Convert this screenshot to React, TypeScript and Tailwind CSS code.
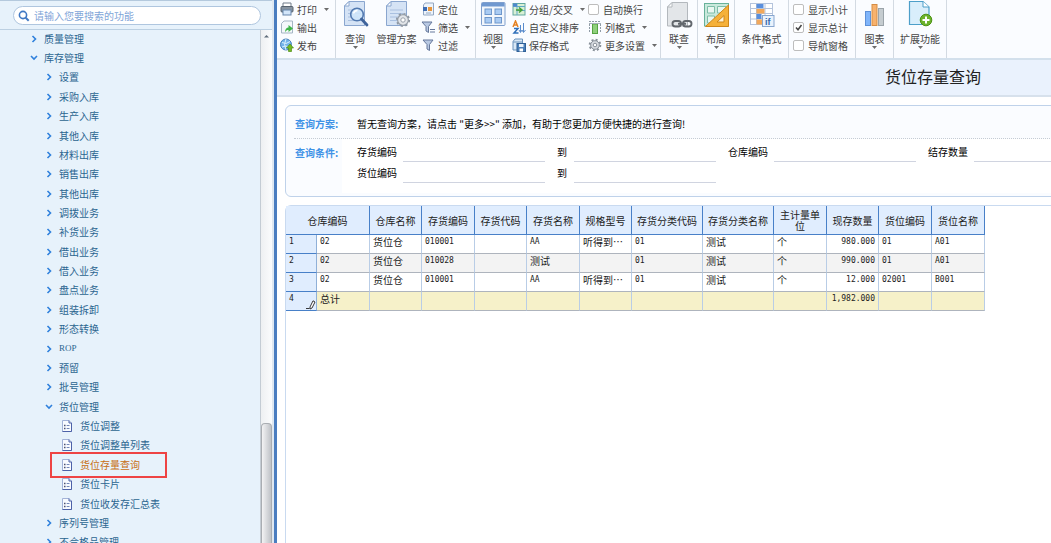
import React from "react";

function PageShape({ children }: { children?: React.ReactNode }) {
  return (
    <svg viewBox="0 0 28 28" className="h-7 w-7 shrink-0" aria-hidden="true">
      <path d="M8 1.5H23.5V25.5H3.5V6Z" fill="#d5e3f5" stroke="#8aa6cf" />
      <path d="M8 1.5V6H3.5Z" fill="#fff" stroke="#8aa6cf" />
      <path d="M7 10H20M7 13.5H20M7 17H17M7 20.5H20" stroke="#a9c0e0" strokeWidth="1.2" />
      {children}
    </svg>
  );
}

const icons = {
  search: (
    <PageShape>
      <circle cx="16" cy="14.5" r="6.3" fill="#cfe6fb" fillOpacity=".9" stroke="#5279b0" strokeWidth="1.6" />
      <path d="M12.5 13.5a4 4 0 0 1 4-3" stroke="#fff" strokeWidth="1.3" fill="none" />
      <path d="M20.5 19L26 25" stroke="#3f649c" strokeWidth="2.8" strokeLinecap="round" />
    </PageShape>
  ),
  plan: (
    <PageShape>
      <circle cx="20" cy="20" r="5.4" fill="#e3e6ea" stroke="#98a0aa" strokeWidth="1.3" />
      <circle cx="20" cy="20" r="6.3" fill="none" stroke="#8d96a1" strokeWidth="1.6" strokeDasharray="2.2 2.7" />
      <circle cx="20" cy="20" r="2.2" fill="#fff" stroke="#98a0aa" />
    </PageShape>
  ),
  view: (
    <svg viewBox="0 0 28 28" className="h-7 w-7" aria-hidden="true">
      <rect x="2.5" y="2.5" width="23.5" height="23" rx="1" fill="#f3f7fc" stroke="#7f9fce" />
      <rect x="3" y="3" width="22.5" height="3.5" fill="#6f98d0" />
      <g fill="#a9cbf3" stroke="#6f97cb">
        <rect x="6" y="9" width="6.5" height="5.5" />
        <rect x="16" y="9" width="6.5" height="5.5" />
        <rect x="6" y="17.5" width="6.5" height="5.5" />
        <rect x="16" y="17.5" width="6.5" height="5.5" />
      </g>
    </svg>
  ),
  link: (
    <svg viewBox="0 0 28 28" className="h-7 w-7" aria-hidden="true">
      <path d="M7 2.5H22.5V26H2.5V7Z" fill="#e3e6e9" stroke="#b3b8bd" />
      <path d="M7 2.5V7H2.5Z" fill="#fff" stroke="#b3b8bd" />
      <g fill="none" stroke="#62676d" strokeWidth="1.9">
        <rect x="7.5" y="21" width="8.5" height="5.5" rx="2.7" />
        <rect x="18" y="21" width="8.5" height="5.5" rx="2.7" />
        <path d="M13 23.8H21" />
      </g>
    </svg>
  ),
  layout: (
    <svg viewBox="0 0 28 28" className="h-7 w-7" aria-hidden="true">
      <rect x="2.500" y="3.5" width="24" height="22.5" fill="#c9e9dc" stroke="#68b19a" />
      <path d="M5.5 6.5H12.5V13H5.5ZM15.5 6.5H24V13H15.5ZM5.5 16H12.5V23H5.5Z" fill="#eaf7f1" stroke="#7dbda8" />
      <path d="M26.5 5V26.5H3.5Z" fill="#f5b13a" stroke="#cf8719" />
      <path d="M22 15.5V22H15Z" fill="#fff3d8" stroke="#cf8719" />
    </svg>
  ),
  condition: (
    <svg viewBox="0 0 28 28" className="h-7 w-7" aria-hidden="true">
      <rect x="2.5" y="3.5" width="22" height="21" fill="#fff" stroke="#b5c4dc" />
      <path d="M2.5 8.5H24.5M2.500 13.5H24.5M2.5 19H24.5M8.5 3.5V24.5M17 3.5V24.5" stroke="#b5c4dc" />
      <rect x="8.5" y="4" width="7" height="4" fill="#5b8fdc" />
      <rect x="8.5" y="9" width="8" height="4.5" fill="#f2a85b" />
      <rect x="8.5" y="14" width="5" height="5" fill="#5b8fdc" />
      <rect x="8.5" y="19.5" width="6" height="5" fill="#f2a85b" />
      <rect x="14.5" y="15.5" width="11.5" height="11" fill="#e9f2fd" stroke="#87a6cf" />
      <text x="17" y="24.5" fontSize="9" fontWeight="700" fill="#3568ad" fontFamily="Liberation Sans, sans-serif">if</text>
    </svg>
  ),
  chart: (
    <svg viewBox="0 0 28 28" className="h-7 w-7" aria-hidden="true">
      <rect x="4.5" y="11.5" width="5" height="14" fill="#80b5fa" stroke="#5e91d8" />
      <rect x="11" y="4.5" width="5" height="21" fill="#f8b26d" stroke="#d58d45" />
      <rect x="17.5" y="8.5" width="5" height="17" fill="#c5ccd0" stroke="#9ba4aa" />
    </svg>
  ),
  extend: (
    <svg viewBox="0 0 28 28" className="h-7 w-7" aria-hidden="true">
      <path d="M3.5 1.5H17L23 7V24.5H3.5Z" fill="#d9eefb" stroke="#4d9fc9" strokeWidth="1.2" />
      <path d="M17 1.5V7H23" fill="#fff" stroke="#4d9fc9" />
      <circle cx="20" cy="20" r="5.8" fill="#6bb22b" stroke="#4c9214" />
      <path d="M16.5 20H23.5M20 16.5V23.5" stroke="#fff" strokeWidth="2" />
    </svg>
  ),
};

function Small({ children }: { children: React.ReactNode }) {
  return (
    <svg viewBox="0 0 14 14" className="h-3.5 w-3.5 shrink-0" aria-hidden="true">
      {children}
    </svg>
  );
}

const small = {
  print: (
    <Small>
      <path d="M3 5V1H11V5" fill="#fff" stroke="#6e7b88" />
      <rect x="1" y="4.5" width="12" height="5.5" rx="1" fill="#8793a0" stroke="#56626f" />
      <rect x="3" y="8" width="8" height="5" fill="#d3e6fa" stroke="#6685ab" />
    </Small>
  ),
  output: (
    <Small>
      <path d="M4 1H12.5V13H1.5V3.5Z" fill="#f4f8fb" stroke="#a4b5c4" />
      <path d="M5 12.5C5 9 6.5 7.5 8.5 7.5V5L13 8.500L8.5 12V10C7 10 6 10.5 5 12.500Z" fill="#3fb54a" />
    </Small>
  ),
  publish: (
    <Small>
      <circle cx="6" cy="6.5" r="5.5" fill="#73b3e8" stroke="#4b83bb" />
      <path d="M2 4.5Q6 7 10 3.5M2 9Q6 7 9 9M6 1Q3 6 6 12" stroke="#d9effd" fill="none" />
      <path d="M10 6L13.5 10H11.5V13.5H8.5V10H6.5Z" fill="#74b822" stroke="#4d8d13" strokeWidth=".7" />
    </Small>
  ),
  locate: (
    <Small>
      <path d="M4 1H12.5V13H2.500V3Z" fill="#edf3fa" stroke="#93a8c4" />
      <rect x="2" y="5" width="4" height="4" fill="#3f6db3" />
      <rect x="7" y="5" width="4" height="4" fill="#e8953a" />
      <path d="M5 11H10" stroke="#93a8c4" />
    </Small>
  ),
  sift: (
    <Small>
      <path d="M1 2H11L7.5 6.500V12.5L5 11V6.500Z" fill="#b9c9e3" stroke="#66789b" />
      <path d="M9 9.5H14M9 12H14" stroke="#66789b" />
    </Small>
  ),
  filter: (
    <Small>
      <path d="M2 2H12L8.500 6.5V12.500L6 11V6.5Z" fill="#b9c9e3" stroke="#66789b" />
    </Small>
  ),
  group: (
    <Small>
      <rect x="1" y="1.5" width="12" height="11.5" fill="#d9f0d5" stroke="#62a8a0" />
      <path d="M1 4.5H13M5 1.5V13M5 8.5H13" stroke="#62a8c8" />
      <rect x="1" y="1.5" width="4" height="3" fill="#4e87ce" />
      <path d="M4 8H9M7 5.5L10 8L7 10.5" stroke="#45a03b" strokeWidth="1.5" fill="none" />
    </Small>
  ),
  sort: (
    <Small>
      <path d="M1 7L3.500 1L6 7M2 5H5" stroke="#e48122" strokeWidth="1.5" fill="none" />
      <path d="M2 8.5H6L2 13H6.5" stroke="#2f6fb9" strokeWidth="1.5" fill="none" />
      <path d="M8.5 5V12M11.5 3V12M7 10L8.5 12.500L10 10L11.5 12.5L13.5 10" stroke="#5a8ccc" fill="none" />
    </Small>
  ),
  save: (
    <Small>
      <path d="M1 3.5L3 1H10.5V12H1Z" fill="#d8e7f5" stroke="#6b93bc" />
      <path d="M1 4H10.5" stroke="#6b93bc" />
      <rect x="5" y="5.5" width="8.5" height="8" fill="#4c80b9" stroke="#2f6097" />
      <rect x="7" y="6" width="4.5" height="3" fill="#e9f2fb" />
      <rect x="7.5" y="10.5" width="3.5" height="3" fill="#fff" />
    </Small>
  ),
  columns: (
    <Small>
      <path d="M1.5 4V13M12.5 4V13" stroke="#8f9ba6" strokeDasharray="2 1" />
      <path d="M1 1.5H13" stroke="#8f9ba6" strokeDasharray="2 1" />
      <rect x="4.5" y="4" width="5" height="9.5" fill="#8fd07c" stroke="#56a343" />
      <path d="M1 3.5H13" stroke="#a5afb8" />
    </Small>
  ),
  gear: (
    <Small>
      <circle cx="7" cy="7" r="5.300" fill="none" stroke="#89919a" strokeWidth="2" strokeDasharray="2 2.16" />
      <circle cx="7" cy="7" r="4.3" fill="#d9dde2" stroke="#89919a" />
      <circle cx="7" cy="7" r="1.8" fill="#fff" stroke="#89919a" />
    </Small>
  ),
};

function Caret() {
  return (
    <svg viewBox="0 0 5 3" className="h-[3px] w-[5px] shrink-0" aria-hidden="true">
      <path d="M0 0H5L2.5 3Z" fill="#6b6b6b" />
    </svg>
  );
}

function Group({ width, children }: { width: string; children: React.ReactNode }) {
  return <div className={`flex shrink-0 border-r border-[#d3dae2] ${width}`}>{children}</div>;
}

function BigButton({ icon, label, caret = true }: { icon: React.ReactNode; label: string; caret?: boolean }) {
  return (
    <button type="button" className="flex shrink-0 flex-col items-center px-[3px]">
      {icon}
      <span className="mt-1 leading-[14px]">{label}</span>
      {caret && <Caret />}
    </button>
  );
}

function ToolRow({ icon, label, caret }: { icon: React.ReactNode; label: string; caret?: boolean }) {
  return (
    <button type="button" className="flex h-[18px] items-center gap-[3px] whitespace-nowrap">
      {icon}
      <span>{label}</span>
      {caret && (
        <span className="ml-1">
          <Caret />
        </span>
      )}
    </button>
  );
}

function CheckRow({ label, checked }: { label: string; checked?: boolean }) {
  return (
    <label className="flex h-[18px] items-center gap-1 whitespace-nowrap">
      <span className="relative flex h-[11px] w-[11px]">
        <input
          type="checkbox"
          defaultChecked={checked}
          className="peer h-[11px] w-[11px] appearance-none rounded-[2px] border border-[#bdbdbd] bg-white"
        />
        <svg viewBox="0 0 11 11" className="pointer-events-none absolute inset-0 hidden peer-checked:block" aria-hidden="true">
          <path d="M3 5.5L5 7.8L8.5 3" stroke="#444" strokeWidth="1.5" fill="none" />
        </svg>
      </span>
      {label}
    </label>
  );
}

function Toolbar() {
  return (
    <div className="flex h-[60px] border-b-2 border-[#d3e0ec] bg-[#fafcff] text-[10px] text-[#444]">
      <Group width="w-[59px] flex-col pl-[3px]">
        <ToolRow icon={small.print} label="打印" caret />
        <ToolRow icon={small.output} label="输出" />
        <ToolRow icon={small.publish} label="发布" />
      </Group>
      <Group width="w-[140px] justify-between pl-0.5 pr-1">
        <BigButton icon={icons.search} label="查询" />
        <BigButton icon={icons.plan} label="管理方案" caret={false} />
        <div className="w-[50px]">
          <ToolRow icon={small.locate} label="定位" />
          <ToolRow icon={small.sift} label="筛选" caret />
          <ToolRow icon={small.filter} label="过滤" />
        </div>
      </Group>
      <Group width="w-[185px]">
        <BigButton icon={icons.view} label="视图" />
        <div className="ml-0.5 w-[76px]">
          <ToolRow icon={small.group} label="分组/交叉" caret />
          <ToolRow icon={small.sort} label="自定义排序" />
          <ToolRow icon={small.save} label="保存格式" />
        </div>
        <div>
          <CheckRow label="自动换行" />
          <ToolRow icon={small.columns} label="列格式" caret />
          <ToolRow icon={small.gear} label="更多设置" caret />
        </div>
      </Group>
      <Group width="w-[37px] justify-center">
        <BigButton icon={icons.link} label="联查" />
      </Group>
      <Group width="w-[37px] justify-center">
        <BigButton icon={icons.layout} label="布局" />
      </Group>
      <Group width="w-[54px] justify-center">
        <BigButton icon={icons.condition} label="条件格式" />
      </Group>
      <Group width="w-[67px] flex-col pl-1">
        <CheckRow label="显示小计" />
        <CheckRow label="显示总计" checked />
        <CheckRow label="导航窗格" />
      </Group>
      <Group width="w-[38px] justify-center">
        <BigButton icon={icons.chart} label="图表" />
      </Group>
      <Group width="w-[53px] justify-center">
        <BigButton icon={icons.extend} label="扩展功能" />
      </Group>
    </div>
  );
}

type Node = { label: string; level: 1 | 2 | 3; open?: boolean; active?: boolean };

const tree: Node[] = [
  { label: "质量管理", level: 1 },
  { label: "库存管理", level: 1, open: true },
  { label: "设置", level: 2 },
  { label: "采购入库", level: 2 },
  { label: "生产入库", level: 2 },
  { label: "其他入库", level: 2 },
  { label: "材料出库", level: 2 },
  { label: "销售出库", level: 2 },
  { label: "其他出库", level: 2 },
  { label: "调拨业务", level: 2 },
  { label: "补货业务", level: 2 },
  { label: "借出业务", level: 2 },
  { label: "借入业务", level: 2 },
  { label: "盘点业务", level: 2 },
  { label: "组装拆卸", level: 2 },
  { label: "形态转换", level: 2 },
  { label: "ROP", level: 2 },
  { label: "预留", level: 2 },
  { label: "批号管理", level: 2 },
  { label: "货位管理", level: 2, open: true },
  { label: "货位调整", level: 3 },
  { label: "货位调整单列表", level: 3 },
  { label: "货位存量查询", level: 3, active: true },
  { label: "货位卡片", level: 3 },
  { label: "货位收发存汇总表", level: 3 },
  { label: "序列号管理", level: 2 },
  { label: "不合格品管理", level: 2 },
];

const indent = { 1: "pl-[30px] gap-[6px]", 2: "pl-[45px] gap-[6px]", 3: "pl-[61px] gap-[7px]" };

function TreeItem({ node }: { node: Node }) {
  return (
    <li className="relative flex items-center">
      <button
        type="button"
        className={`flex items-center whitespace-nowrap ${indent[node.level]} ${node.active ? "text-[#c86f14]" : "text-[#2b6590]"}`}
      >
        {node.level === 3 ? (
          <svg viewBox="0 0 12 12" className="h-3 w-3" aria-hidden="true">
            <path d="M1.5 .5H8L10.5 3V11.5H1.5Z" fill="#f8fbff" stroke="#a3b3d8" />
            <path d="M8 .5V3H10.500V11.5H1.500" fill="none" stroke="#4d62a8" />
            <path d="M3 5.500H4.5M3 8.5H4.5" stroke="#4a5170" strokeWidth="1.6" />
            <path d="M5.7 5.5H8.5M5.7 8.5H8.500" stroke="#7387b8" />
          </svg>
        ) : (
          <svg viewBox="0 0 8 8" className="h-2 w-2" aria-hidden="true">
            <path
              d={node.open ? "M1 2L4 5L7 2" : "M2.5 1L5.5 4L2.5 7"}
              fill="none"
              stroke="#2f80dc"
              strokeWidth="1.6"
            />
          </svg>
        )}
        <span className={node.label === "ROP" ? "font-['Liberation_Serif',serif] text-[9px] leading-none" : "leading-none"}>{node.label}</span>
      </button>
      {node.active && <span className="pointer-events-none absolute -inset-y-[3px] left-[50px] w-[117px] border-2 border-[#ee4444]" />}
    </li>
  );
}

function Sidebar() {
  return (
    <aside className="flex w-[277px] shrink-0 border-r-[3px] border-[#4a7dc0] bg-[#dfe8f1]">
      <div className="flex w-[272px] flex-col border-t border-[#b4c9dd] bg-[#e7f2fb]">
        <div className="h-[29px] shrink-0 border-b border-[#bcd0e2] pl-[13px] pr-[11px] pt-[5px]">
          <label className="flex h-[19px] items-center gap-1 rounded-full border border-[#afc6df] bg-white pl-1">
            <svg viewBox="0 0 12 12" className="h-3 w-3" aria-label="搜索">
              <circle cx="5" cy="5" r="3.6" fill="none" stroke="#3f78c4" strokeWidth="1.6" />
              <path d="M7.7 7.7L10.7 10.7" stroke="#3f78c4" strokeWidth="2" />
            </svg>
            <input
              type="text"
              placeholder="请输入您要搜索的功能"
              className="min-w-0 flex-1 bg-transparent text-[10px] outline-none placeholder:text-[#7fa5d8]"
            />
          </label>
        </div>
        <div className="flex min-h-0 flex-1 overflow-hidden">
          <nav className="min-w-0 flex-1 overflow-hidden text-[10px]">
            <ul className="-mt-px grid h-[523px] auto-rows-fr">
              {tree.map((n) => (
                <TreeItem key={n.label} node={n} />
              ))}
            </ul>
          </nav>
          <div className="flex w-3 flex-col border-l border-[#c4ccd4] bg-linear-to-r from-[#eef0f2] to-[#fbfcfd]">
            <svg viewBox="0 0 11 11" className="h-[11px] w-[11px]" aria-hidden="true">
              <path d="M3 7.5L5.5 5L8 7.5Z" fill="#5f6c7a" />
            </svg>
            <div className="flex-1" />
            <div className="h-[120px] rounded-t-sm border border-b-0 border-[#a9adb2] bg-linear-to-r from-[#f3f3f4] to-[#bfc2c7]" />
          </div>
        </div>
      </div>
    </aside>
  );
}

function Field({ id, label, width }: { id: string; label: string; width: string }) {
  return (
    <div className="flex h-[21px] shrink-0 items-start">
      <label htmlFor={id} className={`shrink-0 leading-[17px] ${width}`}>
        {label}
      </label>
      <input id={id} type="text" className="h-[19px] w-[142px] border-b border-[#d0d4e0] bg-transparent outline-none" />
    </div>
  );
}

function QueryPanel() {
  return (
    <section className="rounded-md border border-[#bfd2ea] bg-[#fafcff] px-2 pb-[3px] pt-[3px] text-[10px] text-black">
      <div className="flex h-[30px] items-center border-b border-dotted border-[#c5ccd4]">
        <h2 className="w-[63px] pl-px font-bold text-[#3f92e6]">查询方案:</h2>
        <p className="whitespace-pre">暂无查询方案，请点击 "更多&gt;&gt;" 添加，有助于您更加方便快捷的进行查询!</p>
      </div>
      <div className="flex">
        <h2 className="w-12 pl-px pt-1.5 font-bold text-[#3f92e6]">查询条件:</h2>
        <div className="flex-1 bg-white pb-2 pl-[15px] pt-1">
          <div className="flex gap-3">
            <Field id="stock-from" label="存货编码" width="w-[46px]" />
            <Field id="stock-to" label="到" width="w-[17px]" />
            <Field id="warehouse" label="仓库编码" width="w-[46px]" />
            <Field id="balance" label="结存数量" width="w-[46px]" />
          </div>
          <div className="flex gap-3">
            <Field id="slot-from" label="货位编码" width="w-[46px]" />
            <Field id="slot-to" label="到" width="w-[17px]" />
          </div>
        </div>
      </div>
    </section>
  );
}

const headers = ["仓库名称", "存货编码", "存货代码", "存货名称", "规格型号", "存货分类代码", "存货分类名称", "主计量单位", "现存数量", "货位编码", "货位名称"];

const rows = [
  ["02", "货位仓", "010001", "", "AA", "听得到⋯", "01", "测试", "个", "980.000", "01", "A01"],
  ["02", "货位仓", "010028", "", "测试", "", "01", "测试", "个", "990.000", "01", "A01"],
  ["02", "货位仓", "010001", "", "AA", "听得到⋯", "01", "测试", "个", "12.000", "02001", "B001"],
  ["总计", "", "", "", "", "", "", "", "", "1,982.000", "", ""],
];

const tones = ["bg-white", "bg-[#f3f3f3]", "bg-white", "bg-[#f6f1c9]"];
const mono = /^[\x20-\x7e]+$/;

function StockTable() {
  return (
    <table className="w-[699px] table-fixed border-separate border-spacing-0 text-[10px] text-[#222]">
      <colgroup>
        <col className="w-[31px]" />
        <col className="w-[53px]" />
        <col className="w-[52px]" />
        <col className="w-[53px]" />
        <col className="w-[52px]" />
        <col className="w-[53px]" />
        <col className="w-[52px]" />
        <col className="w-[71px]" />
        <col className="w-[71px]" />
        <col className="w-[53px]" />
        <col className="w-[52px]" />
        <col className="w-[53px]" />
        <col className="w-[53px]" />
      </colgroup>
      <thead>
        <tr className="h-[29px] bg-[#e0edfe]">
          <th colSpan={2} className="border-b border-r border-[#4880c8] p-0 font-normal leading-[11px]">
            仓库编码
          </th>
          {headers.map((h) => (
            <th key={h} className="border-b border-r border-[#4880c8] px-1 py-0 font-normal leading-[11px]">
              <span className={h === "主计量单位" ? "" : "whitespace-nowrap"}>{h}</span>
            </th>
          ))}
        </tr>
      </thead>
      <tbody>
        {rows.map((r, i) => (
          <tr key={i} className={tones[i]}>
            <th
              scope="row"
              className="h-[19px] border-b border-r border-b-[#4880c8] border-r-[#8fb0d8] bg-[#e0edfe] py-0 pl-[3px] pr-0 text-left align-top font-['DejaVu_Sans_Mono',monospace] text-[8px] font-normal leading-[13px]"
            >
              <div className="flex h-[18px] justify-between">
                {i + 1}
                {i === 3 && (
                  <svg viewBox="0 0 10 10" className="h-2.5 w-2.5 self-end" aria-hidden="true">
                    <path d="M4 7L7 .8L9 2L6 8L4 9Z" fill="#fff" stroke="#222" strokeWidth=".9" />
                    <path d="M0 8.500H3.5" stroke="#222" strokeWidth=".9" />
                  </svg>
                )}
              </div>
            </th>
            {r.map((c, j) => (
              <td
                key={j}
                className={`h-[19px] overflow-hidden whitespace-nowrap border-b border-r border-b-[#aeb4bd] border-r-[#b9cde6] px-[3px] py-0 align-top leading-[13px] ${
                  j === 9 ? "text-right" : ""
                } ${mono.test(c) ? "font-['DejaVu_Sans_Mono',monospace] text-[8px]" : ""}`}
              >
                {c}
              </td>
            ))}
          </tr>
        ))}
      </tbody>
    </table>
  );
}

export default function App() {
  return (
    <div className="flex h-screen overflow-hidden bg-white font-['Noto_Sans_CJK_SC',sans-serif]">
      <Sidebar />
      <main className="min-w-0 flex-1 overflow-hidden">
        <div className="min-w-[1312px]">
          <Toolbar />
          <header className="flex h-[37px] items-center justify-center border-b-2 border-[#d7e1ec] bg-[#eaf2fd] pb-1">
            <h1 className="text-[16px] text-[#222]">货位存量查询</h1>
          </header>
          <div className="flex flex-col gap-2 px-2 pt-2">
            <QueryPanel />
            <section className="h-[360px] rounded-t-md border-l border-t border-[#c9daf0]">
              <StockTable />
            </section>
          </div>
        </div>
      </main>
    </div>
  );
}
